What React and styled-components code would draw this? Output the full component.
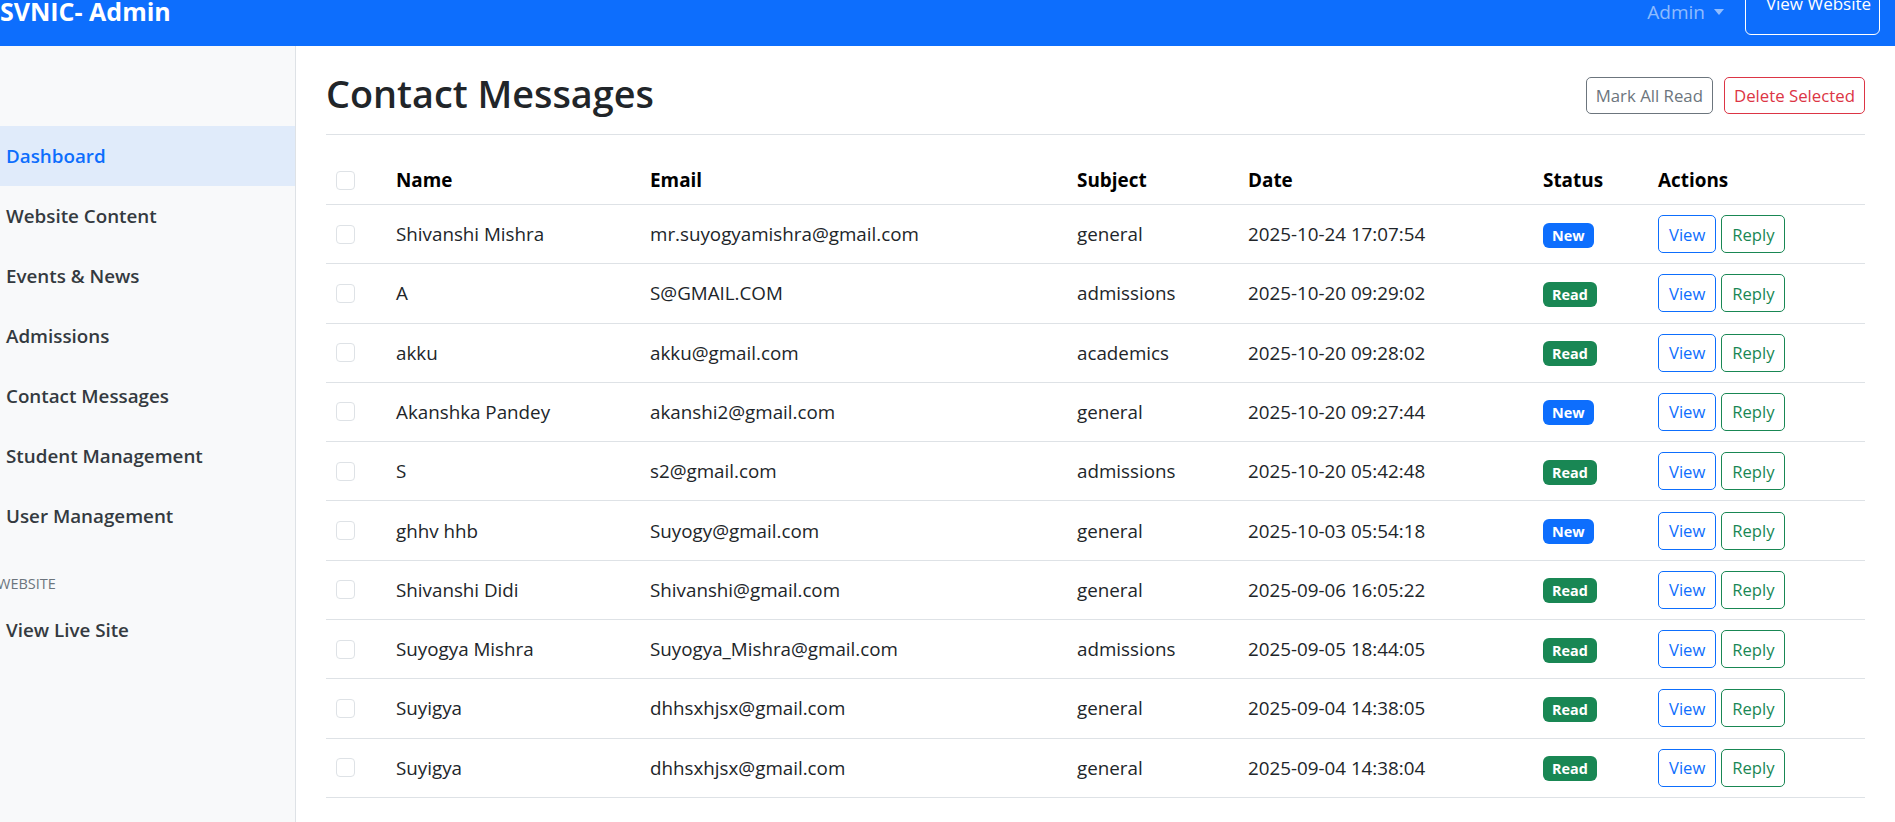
import React from 'react';
import styled, { createGlobalStyle } from 'styled-components';

const GlobalStyle = createGlobalStyle`
    * { box-sizing: border-box; }
    body {
        margin: 0;
        font-family: 'Open Sans', 'Liberation Sans', sans-serif;
        color: #212529;
        background: #ffffff;
        overflow: hidden;
    }
`

const Navbar = styled.header`
    height: 46px;
    background: #0d6efd;
    display: flex;
    align-items: flex-start;
    justify-content: space-between;
`

const Brand = styled.div`
    font-size: 25px;
    font-weight: 700;
    color: #ffffff;
    line-height: 23px;
    white-space: nowrap;
`

const NavRight = styled.div`
    display: flex;
    align-items: flex-start;
    margin-right: 15px;
`

const AdminToggle = styled.div`
    display: flex;
    align-items: center;
    gap: 9px;
    color: rgba(255, 255, 255, 0.55);
    font-size: 19px;
    line-height: 24px;
    margin-right: 21px;

    &::after {
        content: '';
        border-top: 6px solid rgba(255, 255, 255, 0.55);
        border-left: 5.5px solid transparent;
        border-right: 5.5px solid transparent;
    }
`

const OutlineLight = styled.button`
    margin-top: -14px;
    height: 49px;
    width: 135px;
    padding: 6px 0 0 12px;
    border: 1px solid #ffffff;
    border-radius: 6px;
    background: none;
    color: #ffffff;
    font-family: inherit;
    font-size: 17px;
    line-height: 22px;
    display: flex;
    align-items: flex-start;
    justify-content: center;
`

const Layout = styled.div`
    display: flex;
    height: calc(100vh - 46px);
`

const Sidebar = styled.aside`
    width: 296px;
    flex-shrink: 0;
    background: #f8f9fa;
    border-right: 1px solid #dee2e6;
    padding-top: 80px;
`

const SideLink = styled.div`
    height: 60px;
    display: flex;
    align-items: center;
    padding-left: 6px;
    font-size: 18.8px;
    font-weight: 600;
    color: ${({active}) => (active ? '#0d6efd' : '#343a40')};
    background: ${({active}) => (active ? '#e0ebfa' : 'transparent')};
`

const SideHeading = styled.div`
    margin: 22px 0 0 -3px;
    height: 32px;
    line-height: 32px;
    font-size: 14.5px;
    color: #6c757d;
    text-transform: uppercase;
`

const Main = styled.main`
    flex: 1;
    padding: 0 30px;
    min-width: 0;
`

const TitleRow = styled.div`
    display: flex;
    align-items: center;
    justify-content: space-between;
    padding: 24px 0 17px;
    border-bottom: 1px solid #dee2e6;
`

const Title = styled.h2`
    margin: 0;
    font-size: 37.8px;
    font-weight: 600;
    line-height: 47px;
    color: #212529;
`

const Toolbar = styled.div`
    display: flex;
    gap: 11px;
    margin-top: 3px;
`

const SmallButton = styled.button`
    height: 37px;
    padding: 0 9px;
    background: #ffffff;
    border: 1px solid ${({tone}) => tone};
    color: ${({tone}) => tone};
    border-radius: 5px;
    font-family: inherit;
    font-size: 16.8px;
`

const Table = styled.table`
    width: 100%;
    margin-top: 21px;
    border-collapse: collapse;
    table-layout: fixed;
`

const Th = styled.th`
    text-align: left;
    padding: 10px;
    line-height: 28px;
    font-size: 18.9px;
    font-weight: 700;
    color: #000000;
    border-bottom: 1px solid #dee2e6;
    white-space: nowrap;
`

const Td = styled.td`
    padding: 10.15px 10px;
    height: 59px;
    font-size: 18.8px;
    color: #212529;
    border-bottom: 1px solid #dee2e6;
    vertical-align: middle;
    white-space: nowrap;
`

const Check = styled.input.attrs({ type: 'checkbox' })`
    appearance: none;
    display: block;
    margin: 0;
    width: 19px;
    height: 19px;
    border: 1px solid #dee2e6;
    border-radius: 4px;
    background: #ffffff;
`

const Badge = styled.span`
    display: inline-block;
    height: 25px;
    line-height: 25px;
    padding: 0 9px;
    border-radius: 6px;
    font-size: 14.4px;
    font-weight: 700;
    color: #ffffff;
    background: ${({isNew}) => (isNew ? '#0d6efd' : '#198754')};
`

const Actions = styled.div`
    display: flex;
    gap: 5px;
`

const RowButton = styled.button`
    height: 38px;
    padding: 0 10px;
    background: #ffffff;
    border: 1px solid ${({tone}) => tone};
    color: ${({tone}) => tone};
    border-radius: 5px;
    font-family: inherit;
    font-size: 16.6px;
`

const navItems = [
    'Dashboard',
    'Website Content',
    'Events & News',
    'Admissions',
    'Contact Messages',
    'Student Management',
    'User Management',
];

const messages = [
    { name: 'Shivanshi Mishra', email: 'mr.suyogyamishra@gmail.com', subject: 'general', date: '2025-10-24 17:07:54', isNew: true },
    { name: 'A', email: 'S@GMAIL.COM', subject: 'admissions', date: '2025-10-20 09:29:02' },
    { name: 'akku', email: 'akku@gmail.com', subject: 'academics', date: '2025-10-20 09:28:02' },
    { name: 'Akanshka Pandey', email: 'akanshi2@gmail.com', subject: 'general', date: '2025-10-20 09:27:44', isNew: true },
    { name: 'S', email: 's2@gmail.com', subject: 'admissions', date: '2025-10-20 05:42:48' },
    { name: 'ghhv hhb', email: 'Suyogy@gmail.com', subject: 'general', date: '2025-10-03 05:54:18', isNew: true },
    { name: 'Shivanshi Didi', email: 'Shivanshi@gmail.com', subject: 'general', date: '2025-09-06 16:05:22' },
    { name: 'Suyogya Mishra', email: 'Suyogya_Mishra@gmail.com', subject: 'admissions', date: '2025-09-05 18:44:05' },
    { name: 'Suyigya', email: 'dhhsxhjsx@gmail.com', subject: 'general', date: '2025-09-04 14:38:05' },
    { name: 'Suyigya', email: 'dhhsxhjsx@gmail.com', subject: 'general', date: '2025-09-04 14:38:04' },
];

const App = () => {
    return (
        <>
            <GlobalStyle />
            <Navbar>
                <Brand>SVNIC- Admin</Brand>
                <NavRight>
                    <AdminToggle>Admin</AdminToggle>
                    <OutlineLight>View Website</OutlineLight>
                </NavRight>
            </Navbar>
            <Layout>
                <Sidebar>
                    {navItems.map((item, i) => (
                        <SideLink key={item} active={i === 0}>{item}</SideLink>
                    ))}
                    <SideHeading>Website</SideHeading>
                    <SideLink>View Live Site</SideLink>
                </Sidebar>
                <Main>
                    <TitleRow>
                        <Title>Contact Messages</Title>
                        <Toolbar>
                            <SmallButton tone="#6c757d">Mark All Read</SmallButton>
                            <SmallButton tone="#dc3545">Delete Selected</SmallButton>
                        </Toolbar>
                    </TitleRow>
                    <Table>
                        <colgroup>
                            <col style={{ width: 60 }} />
                            <col style={{ width: 254 }} />
                            <col style={{ width: 427 }} />
                            <col style={{ width: 171 }} />
                            <col style={{ width: 295 }} />
                            <col style={{ width: 115 }} />
                            <col />
                        </colgroup>
                        <thead>
                            <tr>
                                <Th><Check /></Th>
                                <Th>Name</Th>
                                <Th>Email</Th>
                                <Th>Subject</Th>
                                <Th>Date</Th>
                                <Th>Status</Th>
                                <Th>Actions</Th>
                            </tr>
                        </thead>
                        <tbody>
                            {messages.map((m, i) => (
                                <tr key={i}>
                                    <Td><Check /></Td>
                                    <Td>{m.name}</Td>
                                    <Td>{m.email}</Td>
                                    <Td>{m.subject}</Td>
                                    <Td>{m.date}</Td>
                                    <Td><Badge isNew={m.isNew}>{m.isNew ? 'New' : 'Read'}</Badge></Td>
                                    <Td>
                                        <Actions>
                                            <RowButton tone="#0d6efd">View</RowButton>
                                            <RowButton tone="#198754">Reply</RowButton>
                                        </Actions>
                                    </Td>
                                </tr>
                            ))}
                        </tbody>
                    </Table>
                </Main>
            </Layout>
        </>
    );
};

export default App;
